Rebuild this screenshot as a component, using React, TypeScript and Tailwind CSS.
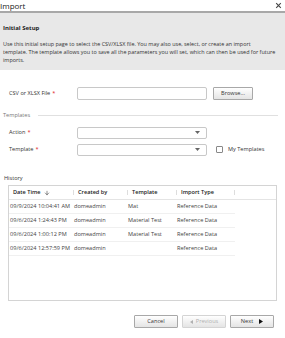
import { ArrowDown } from 'lucide-react';

const rows = [
  { date: '09/9/2024 10:04:41 AM', by: 'domeadmin', template: 'Mat', type: 'Reference Data' },
  { date: '09/6/2024 1:24:43 PM', by: 'domeadmin', template: 'Material Test', type: 'Reference Data' },
  { date: '09/6/2024 1:00:12 PM', by: 'domeadmin', template: 'Material Test', type: 'Reference Data' },
  { date: '09/6/2024 12:57:59 PM', by: 'domeadmin', template: '', type: 'Reference Data' },
];

function Req() {
  return <span className="text-[#e02020] ml-[2px]">*</span>;
}

function Select() {
  return (
    <div className="w-[130px] h-[12px] border border-[#c8c8c8] rounded-[2px] bg-white flex items-center justify-end pr-[6px]">
      <svg width="5" height="3" viewBox="0 0 5 3">
        <path d="M0 0 L5 0 L2.5 3 Z" fill="#666" />
      </svg>
    </div>
  );
}

function Btn({ children, disabled }: { children: React.ReactNode; disabled?: boolean }) {
  return (
    <div
      className={
        'w-[44px] h-[13px] border rounded-[1px] flex items-center justify-center gap-[3px] bg-gradient-to-b from-white to-[#e4e4e4] ' +
        (disabled ? 'border-[#d4d4d4] text-[#b0b0b0]' : 'border-[#a8a8a8] text-[#333]')
      }
    >
      {children}
    </div>
  );
}

export default function App() {
  return (
    <div className="w-[285px] h-[338px] bg-white flex flex-col text-[5.6px] text-[#333] font-['Open_Sans',sans-serif] leading-none overflow-hidden">
      {/* Title */}
      <div className="h-[13px] shrink-0 flex items-center justify-between border-b-2 border-[#a8a8a8]">
        <span className="text-[8px] text-[#222]">Import</span>
        <svg width="7" height="7" viewBox="0 0 7 7" className="mr-[3px]">
          <path d="M1.2 1.2 L5.8 5.8 M5.8 1.2 L1.2 5.8" stroke="#444" strokeWidth="1.1" />
        </svg>
      </div>

      {/* Intro panel */}
      <div className="bg-[#e8e8e8] px-[3px] pt-[12px] pb-[6px] shrink-0">
        <div className="font-bold text-[6px] text-[#222]">Initial Setup</div>
        <p className="mt-[9px] leading-[8px] text-[5.45px]">
          Use this initial setup page to select the CSV/XLSX file. You may also use, select, or create an import
          <br />
          template. The template allows you to save all the parameters you will set, which can then be used for future
          <br />
          imports.
        </p>
      </div>

      {/* Form */}
      <div className="flex flex-col px-[3px] pt-[17px]">
        <div className="flex items-center h-[13px]">
          <div className="w-[74px] pl-[6px]">
            CSV or XLSX File<Req />
          </div>
          <div className="w-[130px] h-[13px] border border-[#c8c8c8] rounded-[2px] bg-white" />
          <div className="ml-[6px] w-[40px] h-[13px] border border-[#a8a8a8] rounded-[1px] bg-gradient-to-b from-white to-[#e4e4e4] flex items-center justify-center">
            Browse...
          </div>
        </div>

        <div className="flex items-center mt-[13px] text-[#777]">
          <span>Templates</span>
          <div className="flex-1 ml-[8px] mr-[4px] border-t border-[#e0e0e0]" />
        </div>

        <div className="flex items-center h-[12px] mt-[8px]">
          <div className="w-[74px] pl-[6px]">
            Action<Req />
          </div>
          <Select />
        </div>
        <div className="flex items-center h-[12px] mt-[5px]">
          <div className="w-[74px] pl-[6px]">
            Template<Req />
          </div>
          <Select />
          <div className="ml-[9px] w-[7px] h-[7px] border border-[#888] rounded-[1px] bg-white" />
          <span className="ml-[5px]">My Templates</span>
        </div>

        <div className="mt-[20px] ml-[1px]">History</div>

        <div className="mt-[4px] mx-[5px] h-[116px] border border-[#d4d4d4] bg-white flex flex-col">
          <div className="flex items-center h-[14px] border-b border-[#e4e4e4] font-semibold text-[#222] shrink-0">
            <div className="w-[64px] pl-[4px] flex items-center gap-[3px]">
              Date Time
              <ArrowDown size={6} strokeWidth={2} />
            </div>
            <div className="w-[54px] border-l border-[#ddd] pl-[4px]">Created by</div>
            <div className="w-[49px] border-l border-[#ddd] pl-[4px]">Template</div>
            <div className="w-[58px] border-l border-[#ddd] pl-[4px]">Import Type</div>
            <div className="h-[5px] border-l border-[#ddd]" />
          </div>
          {rows.map((r) => (
            <div key={r.date} className="flex items-center h-[14px] w-[226px] border-b border-[#f0f0f0] text-[#444]">
              <div className="w-[65px] pl-[1px] whitespace-nowrap">{r.date}</div>
              <div className="w-[54px]">{r.by}</div>
              <div className="w-[49px]">{r.template}</div>
              <div className="w-[58px]">{r.type}</div>
            </div>
          ))}
        </div>

        <div className="flex justify-end gap-[4px] mt-[14px] mr-[8px]">
          <Btn>Cancel</Btn>
          <Btn disabled>
            <svg width="3" height="4" viewBox="0 0 3 4">
              <path d="M3 0 L0 2 L3 4 Z" fill="#b0b0b0" />
            </svg>
            Previous
          </Btn>
          <Btn>
            Next
            <svg width="4" height="5" viewBox="0 0 4 5" className="ml-[3px]">
              <path d="M0 0 L4 2.5 L0 5 Z" fill="#111" />
            </svg>
          </Btn>
        </div>
      </div>
    </div>
  );
}
